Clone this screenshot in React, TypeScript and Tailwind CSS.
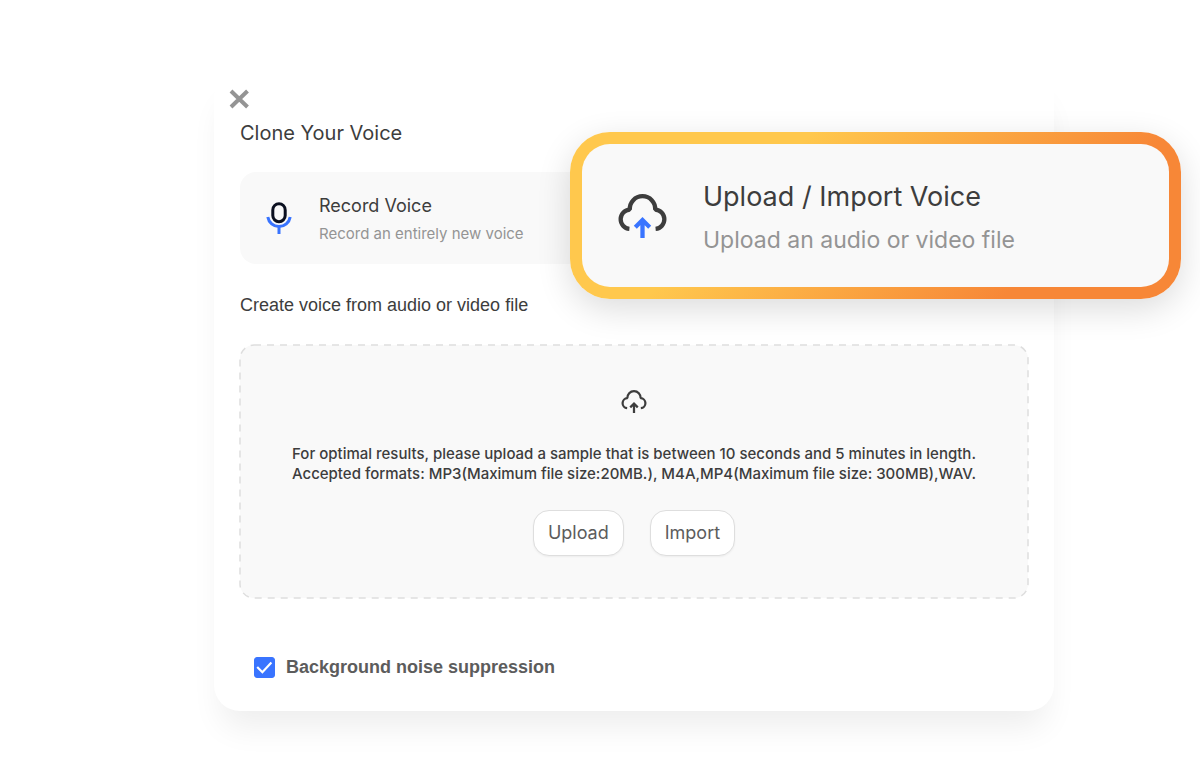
import { useState } from 'react';

function CloudUploadIcon({ className, arrow }: { className: string; arrow: string }) {
  return (
    <svg className={className} viewBox="0 0 49 44" fill="none" strokeWidth="4.3" aria-hidden="true">
      <path
        d="M11.4 34.9A9.68 9.68 0 0 1 11.8 15.6A12.72 12.72 0 1 1 37.2 15.6A9.68 9.68 0 0 1 37.6 34.9"
        stroke="#3d3d3d"
        strokeLinejoin="bevel"
      />
      <path d="M24.5 44V26.5M17.3 33.3L24.5 26.1L31.7 33.3" stroke={arrow} />
    </svg>
  );
}

function MicIcon() {
  return (
    <svg className="size-8 shrink-0" viewBox="0 0 32 32" fill="none" strokeWidth="3" aria-hidden="true">
      <rect x="9.8" y="1.7" width="12.4" height="18" rx="6.2" stroke="#0b1020" />
      <path d="M4.8 15A11.35 11.35 0 0 0 27.2 15M16 25V32" stroke="#3974ff" />
    </svg>
  );
}

function DashedOutline() {
  return (
    <svg className="pointer-events-none absolute inset-0 size-full overflow-visible" fill="none" aria-hidden="true">
      <rect x="0" y="0" width="100%" height="100%" rx="14" stroke="#dedede" strokeWidth="1.5" strokeDasharray="7 6" />
    </svg>
  );
}

function App() {
  const [suppressNoise, setSuppressNoise] = useState(true);

  const fileButton =
    'h-[46px] rounded-2xl border border-[#dedede] bg-white px-3.5 text-lg text-[#5c5c5c] shadow-xs cursor-pointer';

  return (
    <main className="min-h-screen overflow-hidden bg-white pt-[72px] pr-[146px] pb-[69px] pl-[214px] font-['Inter',sans-serif] text-[#3d3d3d]">
      <section
        aria-labelledby="clone-title"
        className="rounded-[26px] bg-white pb-8 shadow-[0_24px_32px_-8px_rgba(0,0,0,0.07)]"
      >
        <button type="button" aria-label="Close" className="ml-[15px] block cursor-pointer pt-[17px]">
          <svg className="size-5" viewBox="0 0 20 20" fill="none" stroke="#949494" strokeWidth="4" aria-hidden="true">
            <path d="M2 2L18.5 18M18.5 2L2 18" />
          </svg>
        </button>

        <div className="px-[26px] pt-2.5">
          <h1 id="clone-title" className="text-xl leading-7">Clone Your Voice</h1>

          {/* Source options */}
          <div className="mt-[25px] grid grid-cols-2 gap-4">
            <button
              type="button"
              className="flex h-[92px] cursor-pointer items-center gap-6 rounded-2xl bg-[#f9f9f9] pl-[23px] text-left"
            >
              <MicIcon />
              <span className="flex flex-col pt-1">
                <span className="text-lg leading-7">Record Voice</span>
                <span className="text-[15px] leading-7 text-[#949494]">Record an entirely new voice</span>
              </span>
            </button>

            <div className="relative">
              <button
                type="button"
                className="absolute -top-10 -right-[153px] -bottom-[35px] -left-[72px] cursor-pointer rounded-[40px] bg-[linear-gradient(135deg,#ffc84d_31%,#f78737_77%)] p-3 text-left shadow-[0_10px_34px_rgba(0,0,0,0.14)]"
              >
                <span className="flex h-full items-center gap-9 rounded-[28px] bg-[#f9f9f9] pl-9">
                  <CloudUploadIcon className="h-11 w-[49px] shrink-0" arrow="#3974ff" />
                  <span className="flex flex-col pt-1">
                    <span className="text-[27px] leading-11">Upload / Import Voice</span>
                    <span className="text-[23px] leading-[42px] text-[#949494]">Upload an audio or video file</span>
                  </span>
                </span>
              </button>
            </div>
          </div>

          <h2 className="mt-[29px] font-['Liberation_Sans',sans-serif] text-lg leading-6">
            Create voice from audio or video file
          </h2>

          {/* Drop area */}
          <div className="relative mt-7 flex flex-col items-center rounded-[14px] bg-[#f9f9f9] pt-[45px] pb-[42px]">
            <DashedOutline />
            <CloudUploadIcon className="h-[23px] w-[26px]" arrow="#3d3d3d" />
            <p className="mt-[31px] text-center text-[15px] leading-5 font-medium">
              For optimal results, please upload a sample that is between 10 seconds and 5 minutes in length.
              <br />
              Accepted formats: MP3(Maximum file size:20MB.), M4A,MP4(Maximum file size: 300MB),WAV.
            </p>
            <div className="mt-[26px] flex gap-[26px]">
              <button type="button" className={fileButton}>Upload</button>
              <button type="button" className={fileButton}>Import</button>
            </div>
          </div>

          <label className="mt-[57px] ml-3.5 flex w-fit cursor-pointer items-center gap-[11px] font-['Liberation_Sans',sans-serif] text-lg leading-6 font-bold text-[#5c5c5c]">
            <span className="relative size-[21px]">
              <input
                type="checkbox"
                checked={suppressNoise}
                onChange={(e) => setSuppressNoise(e.target.checked)}
                className="peer block size-full appearance-none rounded-[3px] border border-[#c4c4c4] checked:border-[#3974ff] checked:bg-[#3974ff]"
              />
              <svg
                className="pointer-events-none absolute inset-0 hidden size-full peer-checked:block"
                viewBox="0 0 21 21"
                fill="none"
                stroke="white"
                strokeWidth="2.2"
                aria-hidden="true"
              >
                <path d="M3.2 10L8.4 15.2L17.4 5.6" />
              </svg>
            </span>
            Background noise suppression
          </label>
        </div>
      </section>
    </main>
  );
}

export default App;
